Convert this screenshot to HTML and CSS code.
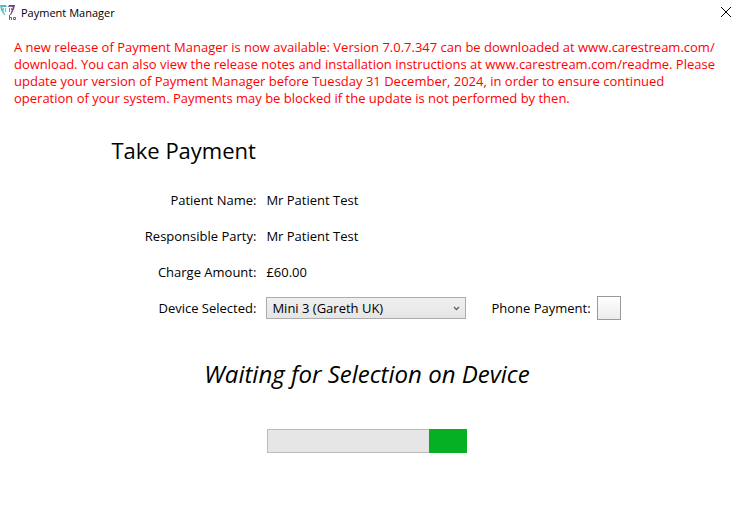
FILE: index.html
```html
<!DOCTYPE html>
<html lang="en">
<head>
    <meta charset="UTF-8">
    <meta name="viewport" content="width=device-width, initial-scale=1.0">
    <title>Payment Manager</title>
    <link rel="stylesheet" href="styles.css">
</head>
<body>
    <header class="titlebar">
        <svg class="app-icon" width="16" height="16" viewBox="0 0 16 16" aria-hidden="true">
            <path d="M0 1 H6 L7 3 H2 L5 11 H4 L1 6 Z" fill="#4fb9c6"/>
            <path d="M3 4 H4 V6 H3 Z M5 4 H6 V8 H5 Z" fill="#7fb4cf"/>
            <path d="M8 3 L9 1 H15 L14 5 L11 11 H10 L13 3 Z" fill="#6b3c7c"/>
            <path d="M8 2 H12 V3 H8 Z M9 4 H10 V8 H9 Z M11 4 H12 V6 H11 Z" fill="#6c78b4"/>
            <path d="M9.5 11 V16 M9.5 13.5 H11.5 V16 M13.5 13.5 H15.5 V15.5 H13.5 Z" fill="none" stroke="#666"/>
        </svg>
        <span class="title">Payment Manager</span>
        <button class="close" type="button" aria-label="Close">
            <svg width="12" height="12" viewBox="0 0 12 12">
                <path d="M1 1 L11 11 M11 1 L1 11" stroke="#000" stroke-width="1"/>
            </svg>
        </button>
    </header>

    <p class="notice">A new release of Payment Manager is now available: Version 7.0.7.347 can be downloaded at www.carestream.com/<wbr>download. You can also view the release notes and installation instructions at www.carestream.com/readme. Please update your version of Payment Manager before Tuesday 31 December, 2024, in order to ensure continued operation of your system. Payments may be blocked if the update is not performed by then.</p>

    <main class="payment">
        <h1 class="heading">Take Payment</h1>
        <form class="details">
            <label for="patient">Patient Name:</label>
            <output id="patient">Mr Patient Test</output>

            <label for="party">Responsible Party:</label>
            <output id="party">Mr Patient Test</output>

            <label for="amount">Charge Amount:</label>
            <output id="amount">£60.00</output>

            <label for="device">Device Selected:</label>
            <div class="device-row">
                <select id="device" class="device">
                    <option>Mini 3 (Gareth UK)</option>
                </select>
                <div class="phone">
                    <label for="phone">Phone Payment:</label>
                    <input type="checkbox" id="phone" class="phone-box">
                </div>
            </div>
        </form>
    </main>

    <section class="status">
        <p class="waiting" id="waiting">Waiting for Selection on Device</p>
        <progress class="progress" aria-labelledby="waiting"></progress>
    </section>
</body>
</html>
```

FILE: styles.css
```css
body {
    margin: 0;
    font-family: "Open Sans", "Noto Sans", sans-serif;
    font-size: 13px;
    line-height: 17px;
    background-color: #fff;
    color: #000;
}
.titlebar {
    display: flex;
    align-items: center;
    gap: 5px;
    height: 24px;
}
.title {
    flex: 1;
    font-size: 11px;
}
.close {
    display: flex;
    padding: 0;
    border: none;
    background: none;
    cursor: pointer;
}
.notice {
    margin: 15px 7px 0 14px;
    color: #f00;
}
.payment {
    width: fit-content;
    margin: 23px auto 0;
}
.heading {
    margin: 0;
    font-size: 22px;
    font-weight: 400;
    line-height: 40px;
}
.details {
    display: grid;
    grid-template-columns: 145px auto;
    grid-auto-rows: 36px;
    align-items: center;
    column-gap: 10px;
    margin-top: 12px;
}
.details label {
    text-align: right;
}
.device-row {
    display: flex;
    align-items: center;
    gap: 25px;
}
.device {
    width: 200px;
    height: 22px;
    padding: 0 5px;
    border: 1px solid #acacac;
    border-radius: 0;
    appearance: none;
    background:
        url("data:image/svg+xml,%3Csvg xmlns='http://www.w3.org/2000/svg' width='7' height='5'%3E%3Cpath d='M1 1l2.5 2.5L6 1' fill='none' stroke='%23606060' stroke-width='1.3'/%3E%3C/svg%3E") no-repeat right 5px center,
        linear-gradient(#f0f0f0, #e5e5e5);
    font: inherit;
    color: #000;
}
.phone {
    display: flex;
    align-items: center;
    gap: 6px;
}
.phone-box {
    width: 24px;
    height: 24px;
    margin: 0;
    border: 1px solid #999;
    appearance: none;
    background: linear-gradient(#fff, #ececec);
}
.phone-box:checked {
    background: #06b025;
}
.status {
    display: flex;
    flex-direction: column;
    align-items: center;
    gap: 35px;
    margin-top: 28px;
    padding-left: 2px;
}
.waiting {
    margin: 0;
    font-size: 24px;
    font-style: italic;
    line-height: 40px;
}
.progress {
    width: 200px;
    height: 24px;
    border: none;
    appearance: none;
}
/* green block runs over the grey border, so the border is drawn as a background layer */
.progress::-webkit-progress-bar {
    box-sizing: border-box;
    border: 1px solid transparent;
    background:
        linear-gradient(to right, transparent 81%, #06b025 81%) border-box,
        linear-gradient(#e6e6e6, #e6e6e6) padding-box,
        linear-gradient(#bcbcbc, #bcbcbc) border-box;
}
```
